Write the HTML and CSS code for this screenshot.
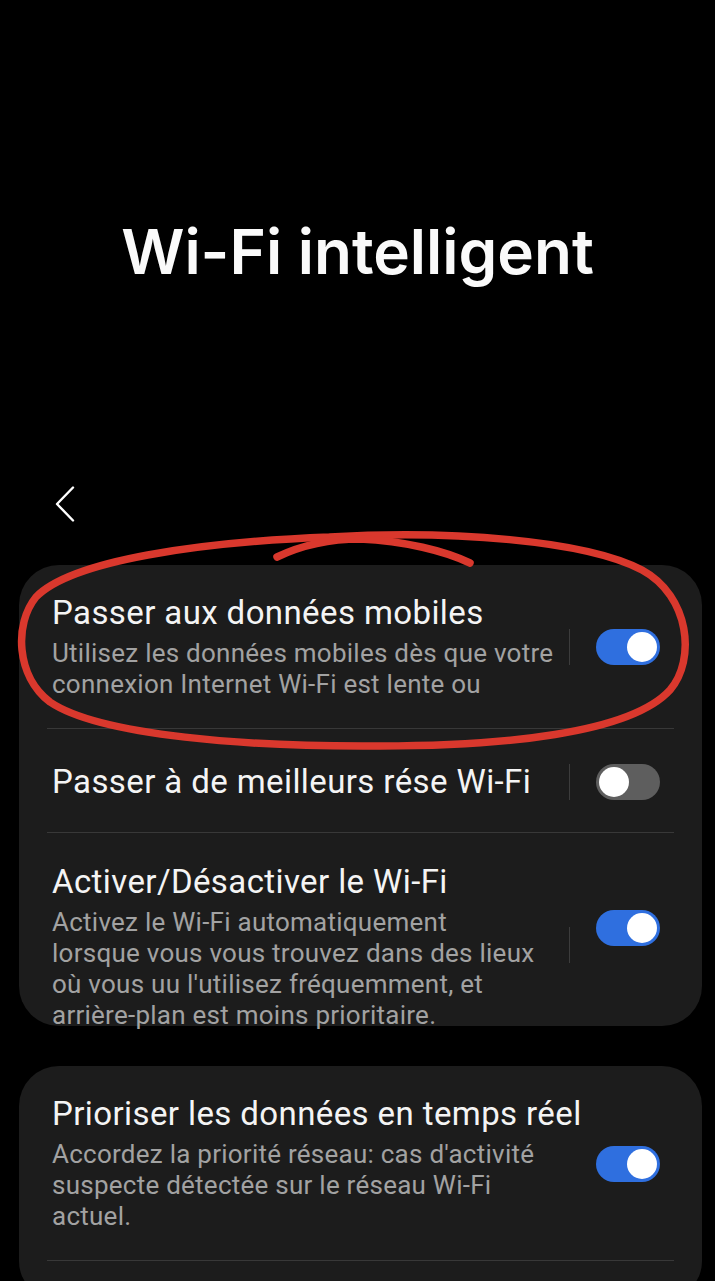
FILE: index.html
```html
<!DOCTYPE html>
<html lang="fr">
<head>
    <meta charset="UTF-8">
    <title>Wi-Fi intelligent</title>
    <link rel="stylesheet" href="styles.css">
</head>
<body>
    <header class="hero">
        <h1>Wi-Fi intelligent</h1>
    </header>

    <div class="toolbar">
        <svg class="back" width="22" height="36" viewBox="0 0 22 36">
            <polyline points="19,1.5 3,18 19,34.5" fill="none" stroke="#fff" stroke-width="2.4" stroke-linecap="round" stroke-linejoin="round"/>
        </svg>
    </div>

    <!-- first group -->
    <section class="card">
        <div class="row">
            <div class="text">
                <div class="title">Passer aux données mobiles</div>
                <div class="desc">Utilisez les données mobiles dès que votre<br>connexion Internet Wi-Fi est lente ou</div>
            </div>
            <span class="sep"></span>
            <span class="switch on"></span>
        </div>
        <hr class="divider">
        <div class="row row-single">
            <div class="text">
                <div class="title">Passer à de meilleurs rése Wi-Fi</div>
            </div>
            <span class="sep"></span>
            <span class="switch"></span>
        </div>
        <hr class="divider">
        <div class="row row-last">
            <div class="text">
                <div class="title">Activer/Désactiver le Wi-Fi</div>
                <div class="desc">Activez le Wi-Fi automatiquement<br>lorsque vous vous trouvez dans des lieux<br>où vous uu l'utilisez fréquemment, et<br>arrière-plan est moins prioritaire.</div>
            </div>
            <span class="sep"></span>
            <span class="switch on switch-up"></span>
        </div>
    </section>

    <!-- second group -->
    <section class="card card-second">
        <div class="row">
            <div class="text">
                <div class="title">Prioriser les données en temps réel</div>
                <div class="desc">Accordez la priorité réseau: cas d'activité<br>suspecte détectée sur le réseau Wi-Fi<br>actuel.</div>
            </div>
            <span class="sep hidden"></span>
            <span class="switch on"></span>
        </div>
        <hr class="divider">
        <div class="row row-empty"></div>
    </section>

    <!-- hand drawn circle -->
    <svg class="scribble" width="715" height="240" viewBox="0 520 715 240">
        <path d="M330,537 C450,530 585,540 642,570 C690,596 696,660 670,690 C630,734 500,746 380,746 C250,747 100,736 50,702 C16,676 14,624 36,597 C72,560 200,542 330,537"
              fill="none" stroke="#d9382d" stroke-width="7.5" stroke-linecap="round"/>
        <path d="M277,557 C300,546 325,539 360,539 C405,541 445,551 470,563"
              fill="none" stroke="#d9382d" stroke-width="7.5" stroke-linecap="round"/>
    </svg>
</body>
</html>
```

FILE: styles.css
```css
body {
    margin: 0;
    background: #000;
    color: #f2f2f2;
    font-family: Roboto, "Liberation Sans", sans-serif;
    position: relative;
    min-height: 1281px;
    overflow: hidden;
}
.hero {
    padding-top: 216px;
    text-align: center;
}
.hero h1 {
    margin: 0;
    font-family: Inter, "Open Sans", sans-serif;
    font-weight: 600;
    font-size: 62px;
    line-height: 72px;
    color: #fafafa;
}
.toolbar {
    padding: 198px 0 0 54px;
    height: 36px;
}
.back {
    display: block;
}
.card {
    background: #1c1c1c;
    border-radius: 40px;
    margin: 43px 13px 0 19px;
}
.card-second {
    margin-top: 40px;
}
.row {
    display: flex;
    align-items: center;
    padding: 29px 42px 28px 33px;
}
.row-single {
    padding: 34px 42px 31px 33px;
}
.row-last {
    padding: 30px 42px 0 33px;
}
.row-last .desc {
    margin-bottom: -5px;
}
.row-empty {
    height: 40px;
    padding: 0;
}
.text {
    flex: 1;
    min-width: 0;
}
.title {
    font-size: 33px;
    line-height: 38px;
    letter-spacing: 0.4px;
    color: #f4f4f4;
    white-space: nowrap;
}
.desc {
    margin-top: 6px;
    font-size: 26px;
    line-height: 31px;
    letter-spacing: 0.25px;
    color: #a2a2a2;
    white-space: nowrap;
}
.sep {
    width: 1px;
    height: 36px;
    background: #3c3c3c;
    margin-right: 26px;
}
.sep.hidden {
    visibility: hidden;
}
.switch {
    position: relative;
    width: 64px;
    height: 36px;
    border-radius: 18px;
    background: #5e5e5e;
    flex-shrink: 0;
}
.switch::after {
    content: "";
    position: absolute;
    top: 3px;
    left: 3px;
    width: 30px;
    height: 30px;
    border-radius: 50%;
    background: #fff;
}
.switch.on {
    background: #2f6fdf;
}
.switch.on::after {
    left: 31px;
}
.switch-up {
    margin-bottom: 34px;
}
.divider {
    border: 0;
    border-top: 1px solid #383838;
    margin: 0 28px;
}
.scribble {
    position: absolute;
    left: 0;
    top: 520px;
}
```
